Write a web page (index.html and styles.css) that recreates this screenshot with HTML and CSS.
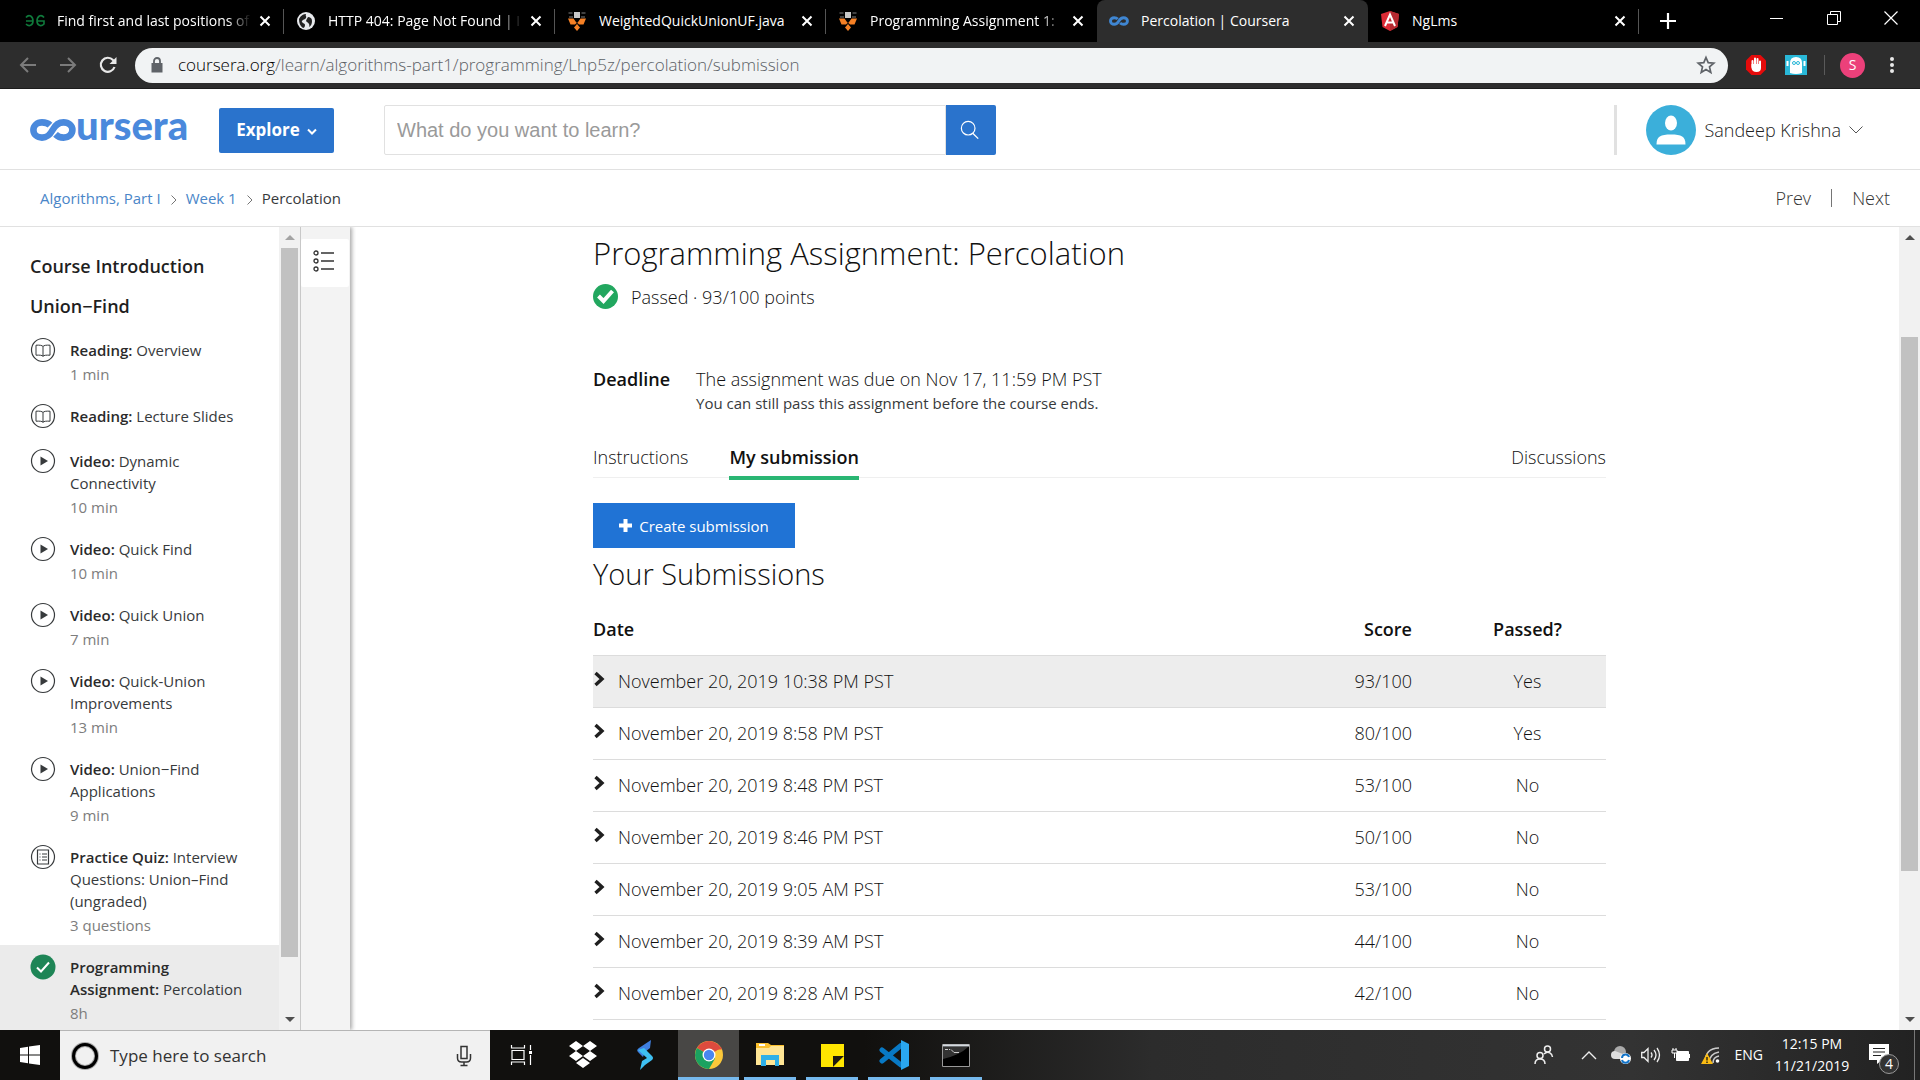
FILE: index.html
```html
<!DOCTYPE html>
<html lang="en">
<head>
<meta charset="utf-8">
<title>Percolation | Coursera</title>
<link rel="stylesheet" href="styles.css">
</head>
<body>
<svg class="defs" width="0" height="0" aria-hidden="true">
  <symbol id="close" viewBox="0 0 12 12"><path d="M1.500 1.500l9 9m0-9l-9 9" fill="none" stroke="#fff" stroke-width="2"/></symbol>
  <symbol id="shield" viewBox="0 0 20 20"><path d="M7 1h6v6H7z" fill="#c8c8c8"/><path d="M1.500 2h4M14.500 2h4M2 6h4M14 6h4" stroke="#555" stroke-width="1.500"/><path d="M1 7.500h5.500l3.500 5 3.500-5H19l-2.500 6h-4.500l-2-2-2 2H3.500z" fill="#f58025"/><path d="M10 13l3 3.500-3 3.500-3-3.500z" fill="#f58025"/></symbol>
  <symbol id="infinity" viewBox="0 0 46 22"><path d="M20 6.200C18 4.200 15.500 3.400 12 3.400 7 3.400 3.400 6.700 3.400 11s3.600 7.600 8.600 7.600c5 0 7.600-2.100 10.600-7.600s6-7.600 11-7.600 8.800 3.300 8.800 7.600-3.800 7.600-8.800 7.600c-3.500 0-6-1.100-8.100-3.200" fill="none" stroke="currentColor" stroke-width="6.600"/></symbol>
  <symbol id="book" viewBox="0 0 26 26"><circle cx="13" cy="13" r="11.500" fill="none" stroke="#373a3c" stroke-width="1.200"/><path d="M13 9.500c-1-1.200-3-1.500-7-1.300v10c4-.2 6 0 7 1 1-1 3-1.200 7-1v-10c-4-.2-6 .1-7 1.300zv10" fill="none" stroke="#373a3c"/></symbol>
  <symbol id="play" viewBox="0 0 26 26"><circle cx="13" cy="13" r="11.500" fill="none" stroke="#373a3c" stroke-width="1.200"/><path d="M10.500 8.500l7.500 4.500-7.500 4.500z" fill="#373a3c"/></symbol>
  <symbol id="quiz" viewBox="0 0 26 26"><circle cx="13" cy="13" r="11.500" fill="none" stroke="#373a3c" stroke-width="1.200"/><path d="M7.500 6h11v14h-11zM12 10h5m-5 3h5m-5 3h5M9.500 10h1m-1 3h1m-1 3h1" fill="none" stroke="#373a3c" stroke-width="1.200"/></symbol>
  <symbol id="done" viewBox="0 0 26 26"><circle cx="13" cy="13" r="12.500" fill="#1e8556"/><path d="M7 13.500l4 4 8-9" fill="none" stroke="#fff" stroke-width="2"/></symbol>
  <symbol id="chev" viewBox="0 0 12 16"><path d="M2.500 2L9 8l-6.500 6" fill="none" stroke="#1f1f1f" stroke-width="3.400"/></symbol>
  <symbol id="sep" viewBox="0 0 8 12"><path d="M1.500 1.500L6 6l-4.500 4.500" fill="none" stroke="#757575"/></symbol>
</svg>

<header class="browser">
  <div class="tabs">
    <div class="tab"><svg class="fav" viewBox="0 0 20 20"><path d="M1 6.500c3-4 7-1 7 3.500s-4 6-7 3M1 10h7M19 6.500c-3-4-7-1-7 3.500s4 6 7 3V10h-7" fill="none" stroke="#0f7a3b" stroke-width="1.600"/></svg><span class="tab-title">Find first and last positions of</span><button class="tab-close" aria-label="Close tab"><svg><use href="#close"/></svg></button></div>
    <div class="tab"><svg class="fav" viewBox="0 0 20 20"><circle cx="10" cy="10" r="9" fill="#e8eaed"/><path d="M3 8c2-4 5-5 7-5-1 2 1 2 0 4s-3 1-4 3 3 2 3 4-1 3-2 3c-3-2-4-5-4-9zM12 6c2 0 4 1 4 4s-1 5-3 6c1-2 0-4-2-5s0-3 1-5z" fill="#222"/></svg><span class="tab-title">HTTP 404: Page Not Found | I</span><button class="tab-close" aria-label="Close tab"><svg><use href="#close"/></svg></button></div>
    <div class="tab"><svg class="fav"><use href="#shield"/></svg><span class="tab-title whole">WeightedQuickUnionUF.java</span><button class="tab-close" aria-label="Close tab"><svg><use href="#close"/></svg></button></div>
    <div class="tab last"><svg class="fav"><use href="#shield"/></svg><span class="tab-title">Programming Assignment 1:</span><button class="tab-close" aria-label="Close tab"><svg><use href="#close"/></svg></button></div>
    <div class="tab active"><svg class="fav inf"><use href="#infinity"/></svg><span class="tab-title whole">Percolation | Coursera</span><button class="tab-close" aria-label="Close tab"><svg><use href="#close"/></svg></button></div>
    <div class="tab"><svg class="fav" viewBox="0 0 20 20"><path d="M10 0l9 3-1.500 13L10 20l-7.500-4L1 3z" fill="#dd2b36"/><path d="M10 0l9 3-1.500 13L10 20z" fill="#b52a31"/><path d="M5 15l5-11.500L15 15M7 11.500h6" fill="none" stroke="#fff" stroke-width="2"/></svg><span class="tab-title whole">NgLms</span><button class="tab-close" aria-label="Close tab"><svg><use href="#close"/></svg></button></div>
    <button class="new-tab" aria-label="New tab"><svg width="16" height="16" viewBox="0 0 16 16"><path d="M8 0v16M0 8h16" stroke="#fff" stroke-width="2.200"/></svg></button>
    <div class="win">
      <button aria-label="Minimize"><svg width="14" height="14"><path d="M0 7.500h13" stroke="#fff"/></svg></button>
      <button aria-label="Restore"><svg width="14" height="14" viewBox="0 0 14 14"><path d="M.5 3.500h10v10H.5zM3.500 3V.5h10v10H11" fill="none" stroke="#fff"/></svg></button>
      <button aria-label="Close"><svg width="14" height="14" viewBox="0 0 14 14"><path d="M.5.500l13 13m0-13l-13 13" stroke="#fff" stroke-width="1.200"/></svg></button>
    </div>
  </div>
  <div class="toolbar">
    <div class="navs">
      <button aria-label="Back"><svg width="18" height="18" viewBox="0 0 18 18"><path d="M17 9H2m7-7L2 9l7 7" fill="none" stroke="#7b7b7b" stroke-width="2"/></svg></button>
      <button aria-label="Forward"><svg width="18" height="18" viewBox="0 0 18 18"><path d="M1 9h15M9 2l7 7-7 7" fill="none" stroke="#7b7b7b" stroke-width="2"/></svg></button>
      <button aria-label="Reload"><svg width="18" height="18" viewBox="0 0 18 18"><path d="M15.500 11A7 7 0 1 1 14 4l2 2" fill="none" stroke="#e8e8e8" stroke-width="2.200"/><path d="M17.500 1v7h-7z" fill="#e8e8e8"/></svg></button>
    </div>
    <div class="omnibox">
      <svg width="12" height="16" viewBox="0 0 12 16"><path d="M.5 6h11v9.500H.5z" fill="#5f6368"/><path d="M3 7V4a3 3 0 0 1 6 0v3" fill="none" stroke="#5f6368" stroke-width="1.800"/></svg>
      <span class="url"><span class="host">coursera.org</span>/learn/algorithms-part1/programming/Lhp5z/percolation/submission</span>
      <svg width="20" height="20" viewBox="0 0 20 20"><path d="M10 2.500l2.200 5.200 5.600.5-4.300 3.700 1.300 5.500L10 14.500l-4.800 2.900 1.300-5.500L2.200 8.200l5.600-.5z" fill="none" stroke="#5f6368" stroke-width="1.700"/></svg>
    </div>
    <div class="exts">
      <svg width="22" height="22" viewBox="0 0 22 22"><path d="M6.500 1h9L21 6.500v9L15.500 21h-9L1 15.500v-9z" fill="#e50b0b"/><path d="M7.500 13V7m2.500 5V4.500m2.500 7.500V5m2.500 8V7.500" stroke="#fff" stroke-width="2" stroke-linecap="round"/><path d="M6.500 10h9.500v4q0 4-4.500 4t-5-4z" fill="#fff"/></svg>
      <svg width="22" height="22" viewBox="0 0 22 22"><path d="M0 1h22v20H0z" fill="#29b8d8"/><path d="M5 19V9q0-6 6-6t6 6v10q-6 2-12 0z" fill="#fff"/><path d="M2.500 7v5M19.500 7v5" stroke="#fff" stroke-width="2"/><circle cx="9" cy="9" r="1.500" fill="none" stroke="#29b8d8"/><circle cx="13" cy="9" r="1.500" fill="none" stroke="#29b8d8"/></svg>
    </div>
    <span class="ext-sep"></span>
    <span class="profile">S</span>
    <svg width="6" height="18" viewBox="0 0 6 18"><g fill="#e8e8e8"><circle cx="3" cy="3" r="2"/><circle cx="3" cy="9" r="2"/><circle cx="3" cy="15" r="2"/></g></svg>
  </div>
</header>

<div class="site-head">
  <a class="logo" href="#" aria-label="coursera"><svg width="46" height="22"><use href="#infinity"/></svg><span>ursera</span></a>
  <button class="explore">Explore <svg width="10" height="8" viewBox="0 0 10 8"><path d="M1 1.500l4 4 4-4" fill="none" stroke="#fff" stroke-width="2"/></svg></button>
  <form class="search"><input type="text" aria-label="Search" placeholder="What do you want to learn?"><button type="button" aria-label="Search"><svg width="20" height="20" viewBox="0 0 22 22"><circle cx="9" cy="9" r="7.500" fill="none" stroke="#fff" stroke-width="1.300"/><path d="M14 14.500l6 6" stroke="#fff" stroke-width="1.500"/></svg></button></form>
  <div class="user">
    <svg width="50" height="50" viewBox="0 0 50 50"><circle cx="25" cy="25" r="25" fill="#3bafda"/><ellipse cx="25" cy="18" rx="6" ry="7.500" fill="#fff"/><path d="M10.500 39.500c0-8 4-10 14.500-10s14.500 2 14.500 10z" fill="#fff"/></svg>
    <span>Sandeep Krishna</span>
    <svg width="14" height="8" viewBox="0 0 14 8"><path d="M.5.500L7 7 13.500.500" fill="none" stroke="#555"/></svg>
  </div>
</div>

<nav class="crumbs">
  <a href="#">Algorithms, Part I</a><svg><use href="#sep"/></svg><a href="#">Week 1</a><svg><use href="#sep"/></svg><span class="here">Percolation</span>
  <div class="pager"><a href="#">Prev</a><span class="bar"></span><a href="#">Next</a></div>
</nav>

<div class="body">
  <aside class="outline">
    <h2>Course Introduction</h2>
    <h2>Union−Find</h2>
    <ul>
      <li><svg><use href="#book"/></svg><div><p><b>Reading:</b> Overview</p><small>1 min</small></div></li>
      <li><svg><use href="#book"/></svg><div><p><b>Reading:</b> Lecture Slides</p></div></li>
      <li><svg><use href="#play"/></svg><div><p><b>Video:</b> Dynamic Connectivity</p><small>10 min</small></div></li>
      <li><svg><use href="#play"/></svg><div><p><b>Video:</b> Quick Find</p><small>10 min</small></div></li>
      <li><svg><use href="#play"/></svg><div><p><b>Video:</b> Quick Union</p><small>7 min</small></div></li>
      <li><svg><use href="#play"/></svg><div><p><b>Video:</b> Quick-Union Improvements</p><small>13 min</small></div></li>
      <li><svg><use href="#play"/></svg><div><p><b>Video:</b> Union−Find Applications</p><small>9 min</small></div></li>
      <li><svg><use href="#quiz"/></svg><div><p><b>Practice Quiz:</b> Interview Questions: Union–Find (ungraded)</p><small>3 questions</small></div></li>
      <li class="current"><svg><use href="#done"/></svg><div><p><b>Programming Assignment:</b> Percolation</p><small>8h</small></div></li>
    </ul>
  </aside>
  <div class="scroll side"><i class="up dim"></i><span class="before"></span><span class="thumb"></span><span class="after"></span><i class="down"></i></div>
  <div class="rail"><button aria-label="Toggle outline"><svg width="22" height="22" viewBox="0 0 22 22"><g fill="none" stroke="#333" stroke-width="1.300"><circle cx="3" cy="3" r="2"/><circle cx="3" cy="11" r="2"/><circle cx="3" cy="19" r="2"/><path d="M8 3h13M8 11h13M8 19h13"/></g></svg></button></div>
  <main>
    <div class="page">
      <h1>Programming Assignment: Percolation</h1>
      <div class="status"><svg width="25" height="25" viewBox="0 0 25 25"><circle cx="12.500" cy="12.500" r="12.500" fill="#22a75f"/><path d="M5.500 12l5 5 9-10" fill="none" stroke="#fff" stroke-width="4"/></svg>Passed · 93/100 points</div>
      <div class="deadline"><b>Deadline</b><div><p>The assignment was due on Nov 17, 11:59 PM PST</p><p class="note">You can still pass this assignment before the course ends.</p></div></div>
      <nav class="sections"><a href="#">Instructions</a><a href="#" class="on">My submission</a><a href="#" class="right">Discussions</a></nav>
      <button class="create"><svg width="13" height="13" viewBox="0 0 13 13"><path d="M6.500 0v13M0 6.500h13" stroke="#fff" stroke-width="4"/></svg>Create submission</button>
      <h3>Your Submissions</h3>
      <table>
        <thead><tr><th>Date</th><th class="score">Score</th><th class="passed">Passed?</th></tr></thead>
        <tbody>
          <tr class="best"><td><svg><use href="#chev"/></svg>November 20, 2019 10:38 PM PST</td><td class="score">93/100</td><td class="passed">Yes</td></tr>
          <tr><td><svg><use href="#chev"/></svg>November 20, 2019 8:58 PM PST</td><td class="score">80/100</td><td class="passed">Yes</td></tr>
          <tr><td><svg><use href="#chev"/></svg>November 20, 2019 8:48 PM PST</td><td class="score">53/100</td><td class="passed">No</td></tr>
          <tr><td><svg><use href="#chev"/></svg>November 20, 2019 8:46 PM PST</td><td class="score">50/100</td><td class="passed">No</td></tr>
          <tr><td><svg><use href="#chev"/></svg>November 20, 2019 9:05 AM PST</td><td class="score">53/100</td><td class="passed">No</td></tr>
          <tr><td><svg><use href="#chev"/></svg>November 20, 2019 8:39 AM PST</td><td class="score">44/100</td><td class="passed">No</td></tr>
          <tr><td><svg><use href="#chev"/></svg>November 20, 2019 8:28 AM PST</td><td class="score">42/100</td><td class="passed">No</td></tr>
        </tbody>
      </table>
    </div>
  </main>
  <div class="scroll page-scroll"><i class="up"></i><span class="before"></span><span class="thumb"></span><span class="after"></span><i class="down"></i></div>
</div>

<footer class="taskbar">
  <button class="start" aria-label="Start"><svg width="20" height="20" viewBox="0 0 20 20"><path d="M0 3l8-1.200V9.500H0zM9 1.600L20 0v9.500H9zM0 10.500h8v7.700L0 17zM9 10.500h11V20L9 18.400z" fill="#fff"/></svg></button>
  <div class="task-search"><svg width="28" height="28" viewBox="0 0 28 28"><circle cx="14" cy="14" r="11.500" fill="none" stroke="#aaa" stroke-width="5"/><circle cx="14" cy="14" r="11.500" fill="none" stroke="#000" stroke-width="3"/></svg><label for="q">Type here to search</label><input id="q" type="text"><svg width="16" height="22" viewBox="0 0 16 22"><path d="M5 1.500h6v12H5zM1.500 9v4q0 4 4 4h5q4 0 4-4V9M8 17v3M4.500 20.500h7" fill="none" stroke="#333" stroke-width="1.500"/></svg></div>
  <div class="apps">
    <button aria-label="Task View"><svg width="22" height="22" viewBox="0 0 22 22"><path d="M2 6.500h12v9H2zM1.500 1v3h13V1M1.500 21v-3h13v3M20.500 1v5m0 5v10" fill="none" stroke="#fff" stroke-width="1.200"/><path d="M19 7h3v3h-3z" fill="#fff"/></svg></button>
    <button aria-label="Dropbox"><svg width="30" height="28" viewBox="0 0 30 28"><path d="M8 0l7 5-7 5-7-5zM22 0l7 5-7 5-7-5zM8 10l7 5-7 5-7-5zM22 10l7 5-7 5-7-5zM15 17l7 5-7 5-7-5z" fill="#fff"/></svg></button>
    <button aria-label="Stacks"><svg width="18" height="30" viewBox="0 0 18 30"><path d="M15 0l-1 8-5 4-2 5-5-5q-2-2 1-4z" fill="#3f7fe0"/><path d="M2 10l6-2 8 8q2 2 0 4l-7 5-5 5 2-9 5-3z" fill="#3ec0f2"/></svg></button>
    <button class="open focus" aria-label="Chrome"><svg width="28" height="28" viewBox="0 0 28 28"><circle cx="14" cy="14" r="14" fill="#fbc83a"/><path d="M14 14L1.900 7A14 14 0 0 1 26.100 7z" fill="#dd4b3e"/><path d="M14 14L1.900 7A14 14 0 0 0 14 28l6-10.500z" fill="#1ba260"/><path d="M14 7.500h12.500" stroke="#dd4b3e" stroke-width="2"/><circle cx="14" cy="14" r="6.500" fill="#fff"/><circle cx="14" cy="14" r="5.200" fill="#4a86f0"/></svg></button>
    <button class="open" aria-label="File Explorer"><svg width="28" height="24" viewBox="0 0 28 24"><path d="M0 0h12l3 2h13v20H0z" fill="#fbc02d"/><path d="M0 5h13l2-2h13v19H0z" fill="#ffe594"/><path d="M3 1h6v2H3z" fill="#fff"/><path d="M5 23V12h18v11h-4v-6h-9v6z" fill="#2fb0e8"/></svg></button>
    <button class="open" aria-label="Sticky Notes"><svg width="23" height="23" viewBox="0 0 23 23"><path d="M0 0h23v12L12 23H0z" fill="#ffe600"/><path d="M12 12h11L12 23z" fill="#1c1a10"/><path d="M23 12v11H12z" fill="#ffe600"/></svg></button>
    <button class="open" aria-label="Visual Studio Code"><svg width="30" height="30" viewBox="0 0 30 30"><path d="M3 10l19 15M3 21L22 5.500" stroke="#0879c5" stroke-width="5" stroke-linecap="round"/><path d="M22 0l8 4v22l-8 4z" fill="#2aa7f0"/></svg></button>
    <button class="open" aria-label="Command Prompt"><svg width="28" height="23" viewBox="0 0 28 23"><path d="M.5.500h27v22H.5z" fill="#000" stroke="#999"/><path d="M1 1.500h26" stroke="#d5dae0" stroke-width="2"/><path d="M1 3h25q-8 8-25 12z" fill="#333"/><path d="M3 5.500h3m1 0h1m1 0l3 3h5" fill="none" stroke="#ccc"/></svg></button>
  </div>
  <div class="tray">
    <svg width="20" height="20" viewBox="0 0 20 20"><g fill="none" stroke="#eee" stroke-width="1.500"><circle cx="13.500" cy="4" r="3"/><circle cx="6" cy="10.500" r="3"/><path d="M1 19q0-5 5-5t5 5M10 9q3-3 6-1 2 1 2.500 4"/></g></svg>
    <svg class="up-arrow" width="16" height="10" viewBox="0 0 16 10"><path d="M1 9l7-7 7 7" fill="none" stroke="#eee" stroke-width="1.400"/></svg>
    <svg width="20" height="18" viewBox="0 0 20 18"><circle cx="9" cy="6" r="6" fill="#aaa"/><path d="M4 13a4 4 0 0 1 0-8l8 3v5z" fill="#ddd"/><circle cx="14.500" cy="12.500" r="5.500" fill="#fff"/><path d="M11 12a3.600 3.600 0 0 1 7-1m0 3a3.600 3.600 0 0 1-7 0" fill="none" stroke="#1173c8" stroke-width="2"/></svg>
    <svg width="20" height="18" viewBox="0 0 20 18"><path d="M.7 6.500H3l4-4v13l-4-4H.7zM10 6.500q2 2.500 0 5M13 4q4 5 0 10M16 2q5 7 0 14" fill="none" stroke="#eee" stroke-width="1.300"/></svg>
    <svg width="20" height="16" viewBox="0 0 20 16"><path d="M5.500 4.500h12v9h-12zM18.500 7v4" fill="#fff" stroke="#fff"/><path d="M1 3h5v3H1zM2 3V1m3 2V1M3.500 6v5" stroke="#fff" fill="#333"/></svg>
    <svg width="20" height="20" viewBox="0 0 20 20"><path d="M4 18C4 8 9 3 18 3M8 18q0-9 10-11M12 18q0-6 6-7" fill="none" stroke="#ccc" stroke-width="1.500"/><circle cx="16.500" cy="16" r="1.800" fill="#fff"/><path d="M6 8l6 11H0z" fill="#fbbc13"/><path d="M6 12v3.500m0 1v1.500" stroke="#111" stroke-width="1.300"/></svg>
    <span class="lang">ENG</span>
    <div class="clock"><time>12:15 PM</time><time>11/21/2019</time></div>
    <div class="notif"><svg width="20" height="20" viewBox="0 0 20 20"><path d="M0 0h20v16h-7l-5 4v-4H0z" fill="#fff"/><path d="M4 4.500h12M4 8h12M4 11.500h8" stroke="#222" stroke-width="1.200"/></svg><span>4</span></div>
  </div>
</footer>
</body>
</html>
```

FILE: styles.css
```css
* { box-sizing: border-box; }
body {
  margin: 0;
  height: 100vh;
  display: flex;
  flex-direction: column;
  overflow: hidden;
  background: #fff;
  color: #111;
  font: 300 18px/24px "Open Sans", "Noto Sans", sans-serif;
}
.defs { display: none; }
h1, h2, h3, p, ul { margin: 0; padding: 0; }
button { border: 0; padding: 0; background: none; font: inherit; color: inherit; }
a { text-decoration: none; color: inherit; }
svg { display: block; flex: none; }
b, h2, th { font-weight: 600; }

/* Browser window */
.browser { flex: none; color: #fff; font-size: 14px; font-weight: 400; }
.tabs { display: flex; height: 42px; padding-left: 13px; background: #000; }
.tab {
  position: relative;
  display: flex;
  align-items: center;
  flex: 0 1 271px;
  min-width: 0;
  padding: 0 13px 0 12px;
}
.tab::after { content: ""; position: absolute; right: 0; top: 9px; width: 1px; height: 25px; background: #555; }
.tab.active::after, .tab.last::after { display: none; }
.tab.active { background: #2d2d2d; border-radius: 8px 8px 0 0; }
.fav { width: 20px; height: 20px; margin-right: 12px; }
.inf { color: #3f86d2; }
.tab-title {
  flex: 1;
  overflow: hidden;
  white-space: nowrap;
  -webkit-mask-image: linear-gradient(90deg, #000 88%, transparent);
  mask-image: linear-gradient(90deg, #000 88%, transparent);
}
.tab-title.whole { -webkit-mask-image: none; mask-image: none; }
.tab-close { margin-left: 8px; }
.tab-close svg { width: 12px; height: 12px; }
.new-tab { padding: 0 21px; }
.win { display: flex; gap: 43px; margin-left: auto; padding: 0 22px 6px 0; }
.toolbar {
  display: flex;
  align-items: center;
  height: 47px;
  padding: 0 25px 0 19px;
  background: #2d2d2d;
  border-bottom: 1px solid #1c1c1c;
}
.navs { display: flex; gap: 22px; }
.omnibox {
  flex: 1;
  display: flex;
  align-items: center;
  height: 35px;
  margin: 0 17px 0 18px;
  padding: 0 12px 0 16px;
  border-radius: 18px;
  background: #f1f3f4;
}
.url { flex: 1; margin-left: 15px; color: #5c6166; font-size: 17px; font-weight: 300; }
.host { color: #000; }
.exts { display: flex; gap: 18px; }
.ext-sep { width: 1px; height: 20px; margin: 0 15px 0 17px; background: #5a5a5a; }
.profile { width: 25px; height: 25px; margin-right: 24px; border-radius: 50%; background: #ec407a; text-align: center; }

/* Site header */
.site-head {
  flex: none;
  display: flex;
  align-items: center;
  height: 81px;
  padding: 2px 57px 0 30px;
  border-bottom: 1px solid #e1e1e1;
}
.logo { display: flex; align-items: center; width: 189px; color: #4a89dc; font: 900 40px/50px Lato, sans-serif; }
.logo span { margin-top: -10px; }
.explore {
  display: flex;
  align-items: center;
  justify-content: center;
  gap: 7px;
  width: 115px;
  height: 45px;
  border-radius: 2px;
  background: #2a73cc;
  color: #fff;
  font-size: 17px;
  font-weight: 700;
}
.explore svg { margin-top: 4px; }
.search { display: flex; width: 612px; height: 50px; margin-left: 50px; }
.search input {
  flex: 1;
  min-width: 0;
  padding: 0 12px;
  border: 1px solid #e1e1e1;
  border-radius: 2px 0 0 2px;
  font: 20px "Liberation Sans", Arial, sans-serif;
}
.search input::placeholder { color: #9a9a9a; }
.search button { display: flex; align-items: center; justify-content: center; width: 50px; padding-right: 3px; border-radius: 0 2px 2px 0; background: #2a73cc; }
.user { display: flex; align-items: center; height: 50px; margin-left: auto; padding-left: 29px; border-left: 3px solid #e1e1e1; color: #222; }
.user span { margin: 0 8px; }

.crumbs { flex: none; display: flex; align-items: center; height: 57px; padding: 0 30px 0 40px; border-bottom: 1px solid #e1e1e1; font-size: 15px; font-weight: 400; }
.crumbs > a { color: #4a86c8; }
.crumbs > svg { width: 8px; height: 12px; margin: 3px 8px 0 9px; }
.here { color: #373a3c; }
.pager { display: flex; align-items: center; gap: 20px; margin-left: auto; color: #333; font-size: 18px; font-weight: 300; }
.bar { width: 1px; height: 18px; background: #757575; }

/* Course outline */
.body { flex: 1; display: flex; min-height: 0; }
.outline { flex: none; width: 279px; overflow: hidden; padding-top: 19px; font-size: 15px; font-weight: 400; line-height: 22px; color: #373a3c; }
.outline h2 { padding: 8px 30px; font-size: 18px; line-height: 24px; color: #1f1f1f; }
.outline ul { padding-top: 2px; list-style: none; }
.outline li { display: flex; gap: 14px; min-height: 45px; padding: 11px 30px 9px; }
.outline li svg { width: 26px; height: 26px; margin-top: -2px; }
.outline b { color: #2a2a2a; }
.outline small { display: block; margin-top: 3px; font-size: 15px; line-height: 21px; color: #7d7d7d; }
.outline .current { height: 120px; background: #ebebeb; }

.scroll { flex: none; display: flex; flex-direction: column; align-items: center; width: 21px; background: #f1f1f1; }
.scroll i { height: 21px; display: flex; align-items: center; }
.scroll i::before { content: ""; border: 5px solid transparent; }
.up::before { border-top-width: 0 !important; border-bottom-color: #505050 !important; }
.down::before { border-bottom-width: 0 !important; border-top-color: #505050 !important; }
.dim::before { border-bottom-color: #a3a3a3 !important; }
.thumb { width: 17px; background: #c1c1c1; }
.side .thumb { flex: 709; }
.side .after { flex: 52; }
.page-scroll .before { flex: 89; }
.page-scroll .thumb { flex: 534; }
.page-scroll .after { flex: 138; }

.rail { position: relative; flex: none; width: 50px; padding-top: 12px; border-left: 1px solid #c8c8c8; background: #f3f3f3; box-shadow: 2px 0 4px #aaa; clip-path: inset(0 -6px 0 0); }
.rail button { display: flex; align-items: center; justify-content: center; width: 48px; height: 48px; border-radius: 2px; background: #fff; padding: 0 3px 5px 0; }

/* Assignment */
main { flex: 1; min-width: 0; overflow: hidden; padding: 0 94px 0 44px; }
.page { max-width: 1013px; margin: 0 auto; padding-top: 6px; }
h1 { font-size: 31px; line-height: 40px; font-weight: 300; }
.status { display: flex; align-items: center; gap: 13px; margin-top: 11px; }
.deadline { display: flex; gap: 26px; margin-top: 58px; }
.note { font-size: 15px; font-weight: 400; line-height: 24px; color: #373a3c; }
.sections { display: flex; gap: 41px; height: 38px; margin-top: 25px; border-bottom: 1px solid #efefef; line-height: 34px; }
.sections a { height: 40px; }
.sections .on { border-bottom: 4px solid #2ab673; font-weight: 600; }
.sections .right { margin-left: auto; }
.create { display: flex; align-items: center; justify-content: center; gap: 7px; width: 202px; height: 45px; margin-top: 25px; background: #2073d5; color: #fff; font-size: 15px; font-weight: 400; }
h3 { margin-top: 8px; font-size: 29px; line-height: 36px; font-weight: 300; }
table { width: 100%; margin-top: 11px; border-collapse: collapse; }
th, td { height: 52px; padding: 0; text-align: left; border-bottom: 1px solid #dcdcdc; }
td svg { display: inline-block; width: 12px; height: 16px; margin-right: 13px; vertical-align: 1px; }
.best { background: #ededed; }
th.score, .score { width: 130px; text-align: right; }
th.passed, .passed { width: 194px; text-align: center; padding-left: 37px; }

/* Taskbar */
.taskbar { position: relative; flex: none; display: flex; height: 50px; background: linear-gradient(90deg, #11100e 45%, #2c2c2c 60%, #333 85%, #222); color: #fff; font-weight: 400; }
.start { display: flex; align-items: center; justify-content: center; width: 60px; }
.task-search { display: flex; align-items: center; width: 430px; padding: 0 18px 0 11px; border-top: 1px solid #b5b5b5; background: #f1f1f1; color: #333; font-size: 17px; }
.task-search label { margin-left: 11px; }
.task-search input { flex: 1; min-width: 0; border: 0; background: none; }
.apps { display: flex; }
.apps button { display: flex; align-items: center; justify-content: center; width: 62px; }
.apps .open { width: 52px; margin: 0 5px; border-bottom: 3px solid #76b9ed; padding-top: 3px; }
.apps .focus { width: 61px; margin: 0 0 0 2px; background: #484745; }
.tray { display: flex; align-items: center; gap: 10px; margin-left: auto; padding-right: 5px; }
.up-arrow { margin: 0 4px 0 17px; }
.lang { margin-left: 4px; font-size: 14px; }
.clock { display: flex; flex-direction: column; width: 78px; text-align: center; font-size: 14px; line-height: 22px; }
.notif { position: relative; width: 54px; padding: 0 0 3px 8px; border-right: 1px solid #777; height: 50px; display: flex; align-items: center; }
.notif span { position: absolute; left: 18px; top: 24px; width: 20px; height: 20px; border: 1px solid #999; border-radius: 50%; background: #333; font-size: 14px; line-height: 18px; text-align: center; }
```
